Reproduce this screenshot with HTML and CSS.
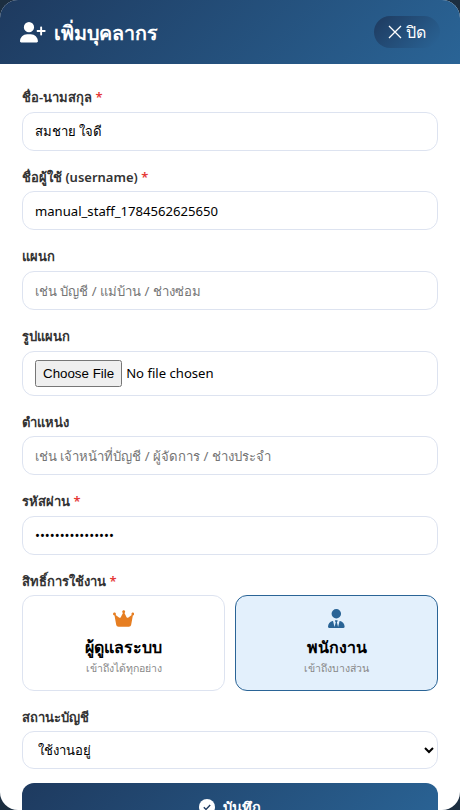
FILE: index.html
```html
<!DOCTYPE html>
<html lang="th">
<head>
    <meta charset="UTF-8">
    <meta name="viewport" content="width=device-width, initial-scale=1.0">
    <title>เพิ่มบุคลากร</title>
    <link rel="stylesheet" href="styles.css">
</head>
<body>
    <div class="modal">
        <div class="modal_head">
            <h2 class="modal_title">
                <svg class="title_icon" viewBox="0 0 640 512"><path d="M96 128a128 128 0 1 1 256 0A128 128 0 1 1 96 128zM0 482.3C0 383.8 79.8 304 178.3 304h91.4C368.2 304 448 383.8 448 482.3c0 16.4-13.3 29.7-29.7 29.7H29.7C13.3 512 0 498.7 0 482.3zM504 312V248H440c-13.3 0-24-10.7-24-24s10.7-24 24-24h64V136c0-13.3 10.7-24 24-24s24 10.7 24 24v64h64c13.3 0 24 10.7 24 24s-10.7 24-24 24H552v64c0 13.3-10.7 24-24 24s-24-10.7-24-24z"/></svg>
                <span class="title_text">เพิ่มบุคลากร</span>
            </h2>
            <button class="close_btn" type="button">
                <svg viewBox="0 0 14 14" width="14" height="14"><path d="M1 1l12 12M13 1L1 13" stroke="#fff" stroke-width="1.3" fill="none"/></svg>
                ปิด
            </button>
        </div>
        <form class="modal_body">
            <label class="label_field">ชื่อ-นามสกุล <span class="req">*</span></label>
            <input class="data_field" type="text" value="สมชาย ใจดี">

            <label class="label_field">ชื่อผู้ใช้ (username) <span class="req">*</span></label>
            <input class="data_field" type="text" value="manual_staff_1784562625650">

            <label class="label_field">แผนก</label>
            <input class="data_field" type="text" placeholder="เช่น บัญชี / แม่บ้าน / ช่างซ่อม">

            <label class="label_field">รูปแผนก</label>
            <input class="data_field file_field" type="file">

            <label class="label_field">ตำแหน่ง</label>
            <input class="data_field" type="text" placeholder="เช่น เจ้าหน้าที่บัญชี / ผู้จัดการ / ช่างประจำ">

            <label class="label_field">รหัสผ่าน <span class="req">*</span></label>
            <input class="data_field" type="password" value="1234567890123456">

            <label class="label_field">สิทธิ์การใช้งาน <span class="req">*</span></label>
            <div class="role_grid">
                <div class="role_card">
                    <svg class="role_icon crown_icon" viewBox="0 0 576 512"><path d="M309 106c11.4-7 19-19.7 19-34c0-22.1-17.9-40-40-40s-40 17.9-40 40c0 14.4 7.6 27 19 34L209.7 220.6c-9.1 18.2-32.7 23.4-48.6 10.7L72 160c5-6.7 8-15 8-24c0-22.1-17.9-40-40-40S0 113.9 0 136s17.9 40 40 40c.2 0 .5 0 .7 0L86.4 427.4c5.5 30.4 32 52.6 63 52.6H426.6c30.9 0 57.4-22.1 63-52.6L535.3 176c.2 0 .5 0 .7 0c22.1 0 40-17.9 40-40s-17.9-40-40-40s-40 17.9-40 40c0 9 3 17.3 8 24l-89.1 71.3c-15.9 12.7-39.5 7.5-48.6-10.7L309 106z"/></svg>
                    <span class="role_name">ผู้ดูแลระบบ</span>
                    <span class="role_desc">เข้าถึงได้ทุกอย่าง</span>
                </div>
                <div class="role_card role_active">
                    <svg class="role_icon tie_icon" viewBox="0 0 448 512"><path d="M96 128a128 128 0 1 0 256 0A128 128 0 1 0 96 128zm94.5 200.2l18.6 31L175.8 483.1l-36-146.9c-2-8.1-9.8-13.4-17.9-11.3C51.9 342.4 0 405.8 0 481.3c0 17 13.8 30.7 30.7 30.7H162.5c0 0 0 0 .1 0H168 280h5.5c0 0 0 0 .1 0H417.3c17 0 30.7-13.8 30.7-30.7c0-75.5-51.9-138.9-121.9-156.4c-8.1-2-15.9 3.3-17.9 11.3l-36 146.9L238.9 359.2l18.6-31c6.4-10.7-1.3-24.2-13.7-24.2H224 204.3c-12.4 0-20.1 13.6-13.7 24.2z"/></svg>
                    <span class="role_name">พนักงาน</span>
                    <span class="role_desc">เข้าถึงบางส่วน</span>
                </div>
            </div>

            <label class="label_field">สถานะบัญชี</label>
            <select class="data_field select_field">
                <option>ใช้งานอยู่</option>
            </select>

            <button class="save_btn" type="button">
                <svg viewBox="0 0 16 16" width="16" height="16"><circle cx="8" cy="8" r="8" fill="#fff"/><path d="M4.8 8.2l2.2 2.2 4.2-4.4" stroke="#1e3a5f" stroke-width="1.4" fill="none"/></svg>
                บันทึก
            </button>
        </form>
    </div>
</body>
</html>
```

FILE: styles.css
```css
* {
    box-sizing: border-box;
}
html, body {
    height: 100%;
}
body {
    margin: 0;
    overflow: hidden;
    background: #1c2e40;
    font-family: "Noto Sans", sans-serif;
    color: #000;
}
.modal {
    background: #fff;
    border-radius: 18px;
    overflow: hidden;
    height: 810px;
}
.modal_head {
    height: 64px;
    display: flex;
    align-items: center;
    justify-content: space-between;
    padding: 0 20px;
    background: linear-gradient(135deg, #1e3a5f, #2a6496);
    color: #fff;
}
.modal_title {
    margin: 0;
    display: flex;
    align-items: center;
    gap: 8px;
    font-size: 19.7px;
    font-weight: 700;
}
.title_icon {
    height: 20.5px;
    margin-top: 1px;
    fill: #fff;
}
.title_text {
    margin-top: 2px;
}
.close_btn {
    display: flex;
    align-items: center;
    gap: 4px;
    height: 32px;
    padding: 0 14px;
    border: 0;
    border-radius: 16px;
    background: linear-gradient(135deg, #1e3a5f, #2a6496);
    color: #fff;
    font-family: inherit;
    font-size: 16px;
}
.modal_body {
    padding: 22.25px 22px 0;
}
.label_field {
    display: block;
    height: 21.6px;
    margin-bottom: 4px;
    font-size: 13px;
    font-weight: 600;
    line-height: 22px;
    color: #333;
}
.req {
    color: #e53935;
}
.data_field {
    display: block;
    width: 100%;
    height: 39px;
    margin-bottom: 15px;
    padding: 0 12px;
    border: 1.5px solid #dde3f0;
    border-radius: 12px;
    background: #fff;
    outline: none;
    font-family: inherit;
    font-size: 13.12px;
    color: #000;
}
.data_field::placeholder {
    color: #757575;
}
.file_field {
    height: 45px;
    padding: 8px 12px;
}
.file_field::file-selector-button {
    height: 27px;
    font-size: 13.33px;
}
.select_field {
    height: 38px;
    padding: 0 11px;
}
.role_grid {
    display: grid;
    grid-template-columns: 1fr 1fr;
    gap: 10px;
    margin-bottom: 14.4px;
}
.role_card {
    height: 96px;
    display: flex;
    flex-direction: column;
    align-items: center;
    padding-top: 13px;
    border: 1.5px solid #dde3f0;
    border-radius: 12px;
    background: #fff;
}
.role_active {
    border-color: #2a6496;
    background: #e3f0fc;
}
.role_icon {
    height: 19px;
}
.crown_icon {
    fill: #e67e22;
}
.tie_icon {
    fill: #2a6496;
}
.role_name {
    margin-top: 7px;
    font-size: 16px;
    font-weight: 700;
    line-height: 24px;
}
.role_desc {
    margin-top: 1px;
    font-size: 10.5px;
    line-height: 16px;
    color: #888;
}
.save_btn {
    width: 100%;
    height: 48px;
    display: flex;
    align-items: center;
    justify-content: center;
    gap: 8px;
    margin-top: -1px;
    border: 0;
    border-radius: 12px;
    background: linear-gradient(135deg, #1e3a5f, #2a6496);
    color: #fff;
    font-family: inherit;
    font-size: 14.5px;
    font-weight: 700;
}
```
